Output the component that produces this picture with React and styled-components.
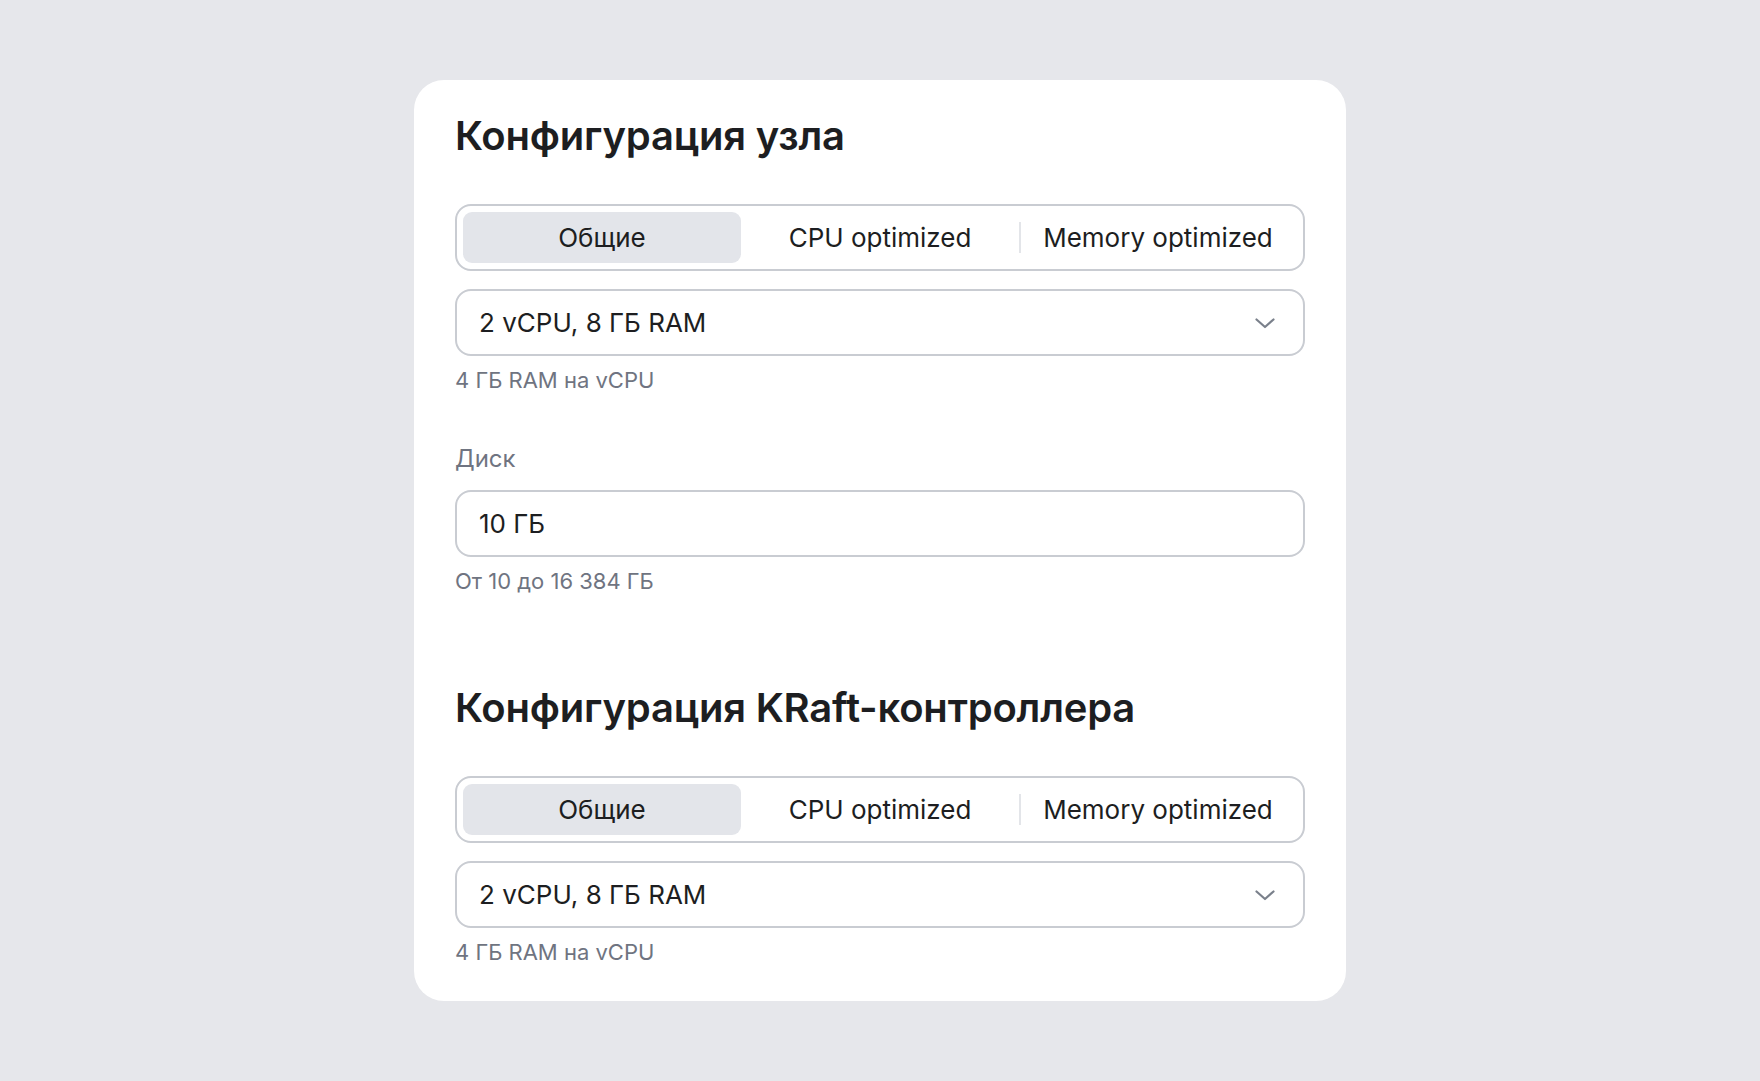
import React from "react";
import styled, { createGlobalStyle } from "styled-components";

const Global = createGlobalStyle`
  html, body { margin: 0; padding: 0; }
  body {
    background: #e6e7eb;
    font-family: Inter, "Noto Sans", "Liberation Sans", sans-serif;
    -webkit-font-smoothing: antialiased;
  }
`;

const Page = styled.div`
  min-height: 100vh;
  display: flex;
  align-items: center;
  justify-content: center;
`;

const Card = styled.div`
  width: 932px;
  box-sizing: border-box;
  background: #ffffff;
  border-radius: 30px;
  padding: 32px 41px 35px;
  display: flex;
  flex-direction: column;
`;

const Title = styled.h2`
  margin: ${(p) => (p.$first ? "0" : "89px")} 0 44px;
  font-size: 40px;
  line-height: 48px;
  font-weight: 600;
  color: #1d1e21;
  letter-spacing: -0.2px;
`;

const Segmented = styled.div`
  box-sizing: border-box;
  height: 67px;
  border: 2px solid #c9ccd2;
  border-radius: 16px;
  padding: 6px;
  display: grid;
  grid-template-columns: 1fr 1fr 1fr;
  align-items: stretch;
`;

const Tab = styled.div`
  position: relative;
  display: flex;
  align-items: center;
  justify-content: center;
  border-radius: 9px;
  background: ${(p) => (p.$active ? "#e3e5ea" : "transparent")};
  font-size: 26px;
  color: #1d1e21;
  ${(p) =>
    p.$divider &&
    `
    &::before {
      content: "";
      position: absolute;
      left: 0;
      top: 10px;
      bottom: 10px;
      width: 2px;
      background: #e3e5e9;
    }
  `}
`;

const Field = styled.div`
  box-sizing: border-box;
  height: 67px;
  border: 2px solid #c9ccd2;
  border-radius: 16px;
  padding: 0 27px 0 22px;
  display: flex;
  align-items: center;
  justify-content: space-between;
  font-size: 26px;
  color: #1d1e21;
  margin-top: ${(p) => p.$mt || 0}px;
`;

const Hint = styled.div`
  margin-top: 10px;
  font-size: 22px;
  line-height: 28px;
  color: #6f7481;
`;

const Label = styled.div`
  margin-top: 50px;
  font-size: 24px;
  line-height: 30px;
  color: #6f7481;
`;

const Chevron = () => (
  <svg width="22" height="12" viewBox="0 0 22 12" fill="none">
    <path d="M2.5 2.5l8.5 7.5 8.5-7.5" stroke="#7a808b" strokeWidth="2.2" strokeLinecap="round" strokeLinejoin="round" />
  </svg>
);

const Tabs = () => (
  <Segmented>
    <Tab $active>Общие</Tab>
    <Tab>CPU optimized</Tab>
    <Tab $divider>Memory optimized</Tab>
  </Segmented>
);

export default function App() {
  return (
    <>
      <Global />
      <Page>
        <Card>
          <Title $first>Конфигурация узла</Title>
          <Tabs />
          <Field $mt={18}>
            <span>2 vCPU, 8 ГБ RAM</span>
            <Chevron />
          </Field>
          <Hint>4 ГБ RAM на vCPU</Hint>
          <Label>Диск</Label>
          <Field $mt={16}>
            <span>10 ГБ</span>
          </Field>
          <Hint>От 10 до 16 384 ГБ</Hint>
          <Title>Конфигурация KRaft-контроллера</Title>
          <Tabs />
          <Field $mt={18}>
            <span>2 vCPU, 8 ГБ RAM</span>
            <Chevron />
          </Field>
          <Hint>4 ГБ RAM на vCPU</Hint>
        </Card>
      </Page>
    </>
  );
}
